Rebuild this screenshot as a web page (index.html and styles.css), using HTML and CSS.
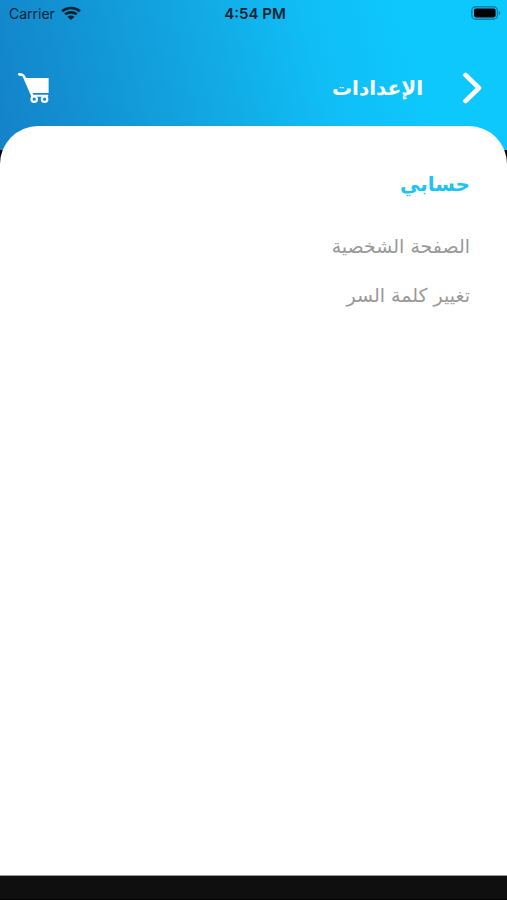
FILE: index.html
```html
<!DOCTYPE html>
<html lang="ar" dir="rtl">
<head>
    <meta charset="UTF-8">
    <meta name="viewport" content="width=device-width, initial-scale=1.0">
    <title>الإعدادات</title>
    <link rel="stylesheet" href="styles.css">
</head>
<body>
    <header class="header">
        <div class="status-bar" dir="ltr">
            <div class="carrier">
                <span>Carrier</span>
                <svg width="20" height="14" viewBox="0 0 18 14" preserveAspectRatio="none" aria-hidden="true">
                    <path d="M1 5.2a11.6 11.6 0 0 1 16 0M3.8 8.4a7.6 7.6 0 0 1 10.4 0" fill="none" stroke="#032331" stroke-width="2.6"/>
                    <path d="M5.8 10.7a4.6 4.6 0 0 1 6.4 0L9 14z" fill="#032331"/>
                </svg>
            </div>
            <div class="time">4:54 PM</div>
            <div class="battery">
                <svg width="30" height="14" viewBox="0 0 30 14" aria-hidden="true">
                    <rect x="0.8" y="0.8" width="25.6" height="12.4" rx="4" fill="none" stroke="#087fa6" stroke-width="1.4"/>
                    <rect x="3" y="2.6" width="21.6" height="8.8" rx="1.8" fill="#000"/>
                    <path d="M27.8 4.8c2 .8 2 3.6 0 4.4z" fill="#087fa6"/>
                </svg>
            </div>
        </div>
        <nav class="nav-bar">
            <button class="icon-button" type="button" aria-label="رجوع">
                <svg width="20" height="32" viewBox="0 0 20 32" aria-hidden="true">
                    <path d="M2.5 3l13.5 13L2.5 29" fill="none" stroke="#fff" stroke-width="4.6" stroke-linecap="round" stroke-linejoin="round"/>
                </svg>
            </button>
            <h1 class="title">الإعدادات</h1>
            <button class="icon-button" type="button" aria-label="السلة">
                <svg width="32" height="32" viewBox="0 0 32 32" aria-hidden="true">
                    <path d="M2.2 2.2l2.6.6c1.6.4 2 1 2.7 2.6l8 18.6" fill="none" stroke="#fff" stroke-width="2.6" stroke-linecap="round"/>
                    <path d="M7.6 6H31.6v15H14.4z" fill="#fff"/>
                    <path d="M15.2 23.8H30.4" fill="none" stroke="#fff" stroke-width="2" stroke-linecap="round"/>
                    <circle cx="17.2" cy="27.2" r="2.7" fill="none" stroke="#fff" stroke-width="2.2"/>
                    <circle cx="27.6" cy="27.2" r="2.7" fill="none" stroke="#fff" stroke-width="2.2"/>
                </svg>
            </button>
        </nav>
    </header>
    <main class="content">
        <h2 class="section-title">حسابي</h2>
        <ul class="menu">
            <li><a href="#profile">الصفحة الشخصية</a></li>
            <li><a href="#password">تغيير كلمة السر</a></li>
        </ul>
    </main>
    <footer class="bottom-bar"></footer>
</body>
</html>
```

FILE: styles.css
```css
* {
    box-sizing: border-box;
}
body {
    margin: 0;
    min-height: 100vh;
    display: flex;
    flex-direction: column;
    background-color: #000;
    font-family: "DejaVu Sans", sans-serif;
}
.header {
    padding-bottom: 42px;
    background: linear-gradient(76deg, #1482c8 0%, #1296d6 22%, #12a9e4 42%, #10bdf5 62%, #0dc8fd 80%);
}
.status-bar {
    display: grid;
    grid-template-columns: 1fr auto 1fr;
    align-items: center;
    height: 26px;
    padding: 0 6px 0 9px;
    font-family: Inter, sans-serif;
    font-size: 14px;
    color: #032331;
}
.carrier {
    display: flex;
    align-items: center;
    gap: 6px;
}
.time {
    font-size: 15px;
    font-weight: 600;
}
.battery {
    display: flex;
    justify-content: flex-end;
}
.nav-bar {
    display: flex;
    align-items: center;
    height: 82px;
    padding: 42px 24px 0 17px;
}
.icon-button {
    display: flex;
    padding: 0;
    border: 0;
    background: none;
    cursor: pointer;
}
.title {
    flex: 1;
    margin: 0;
    padding-right: 40px;
    font-size: 20px;
    line-height: 32px;
    color: #fff;
}
.content {
    flex: 1;
    margin-top: -24px;
    padding: 40px 37px;
    border-radius: 38px 38px 0 0;
    background-color: #fff;
}
.section-title {
    margin: 0;
    font-size: 20px;
    line-height: 36px;
    color: #1cc3f3;
}
.menu {
    margin: 20px 0 0;
    padding: 0;
    list-style: none;
}
.menu a {
    display: block;
    font-size: 19px;
    line-height: 49px;
    color: #999;
    text-decoration: none;
}
.bottom-bar {
    height: 25px;
    border-top: 1px solid #999;
    border-bottom: 1px solid #000;
    background-color: #0f0f0f;
}
```
